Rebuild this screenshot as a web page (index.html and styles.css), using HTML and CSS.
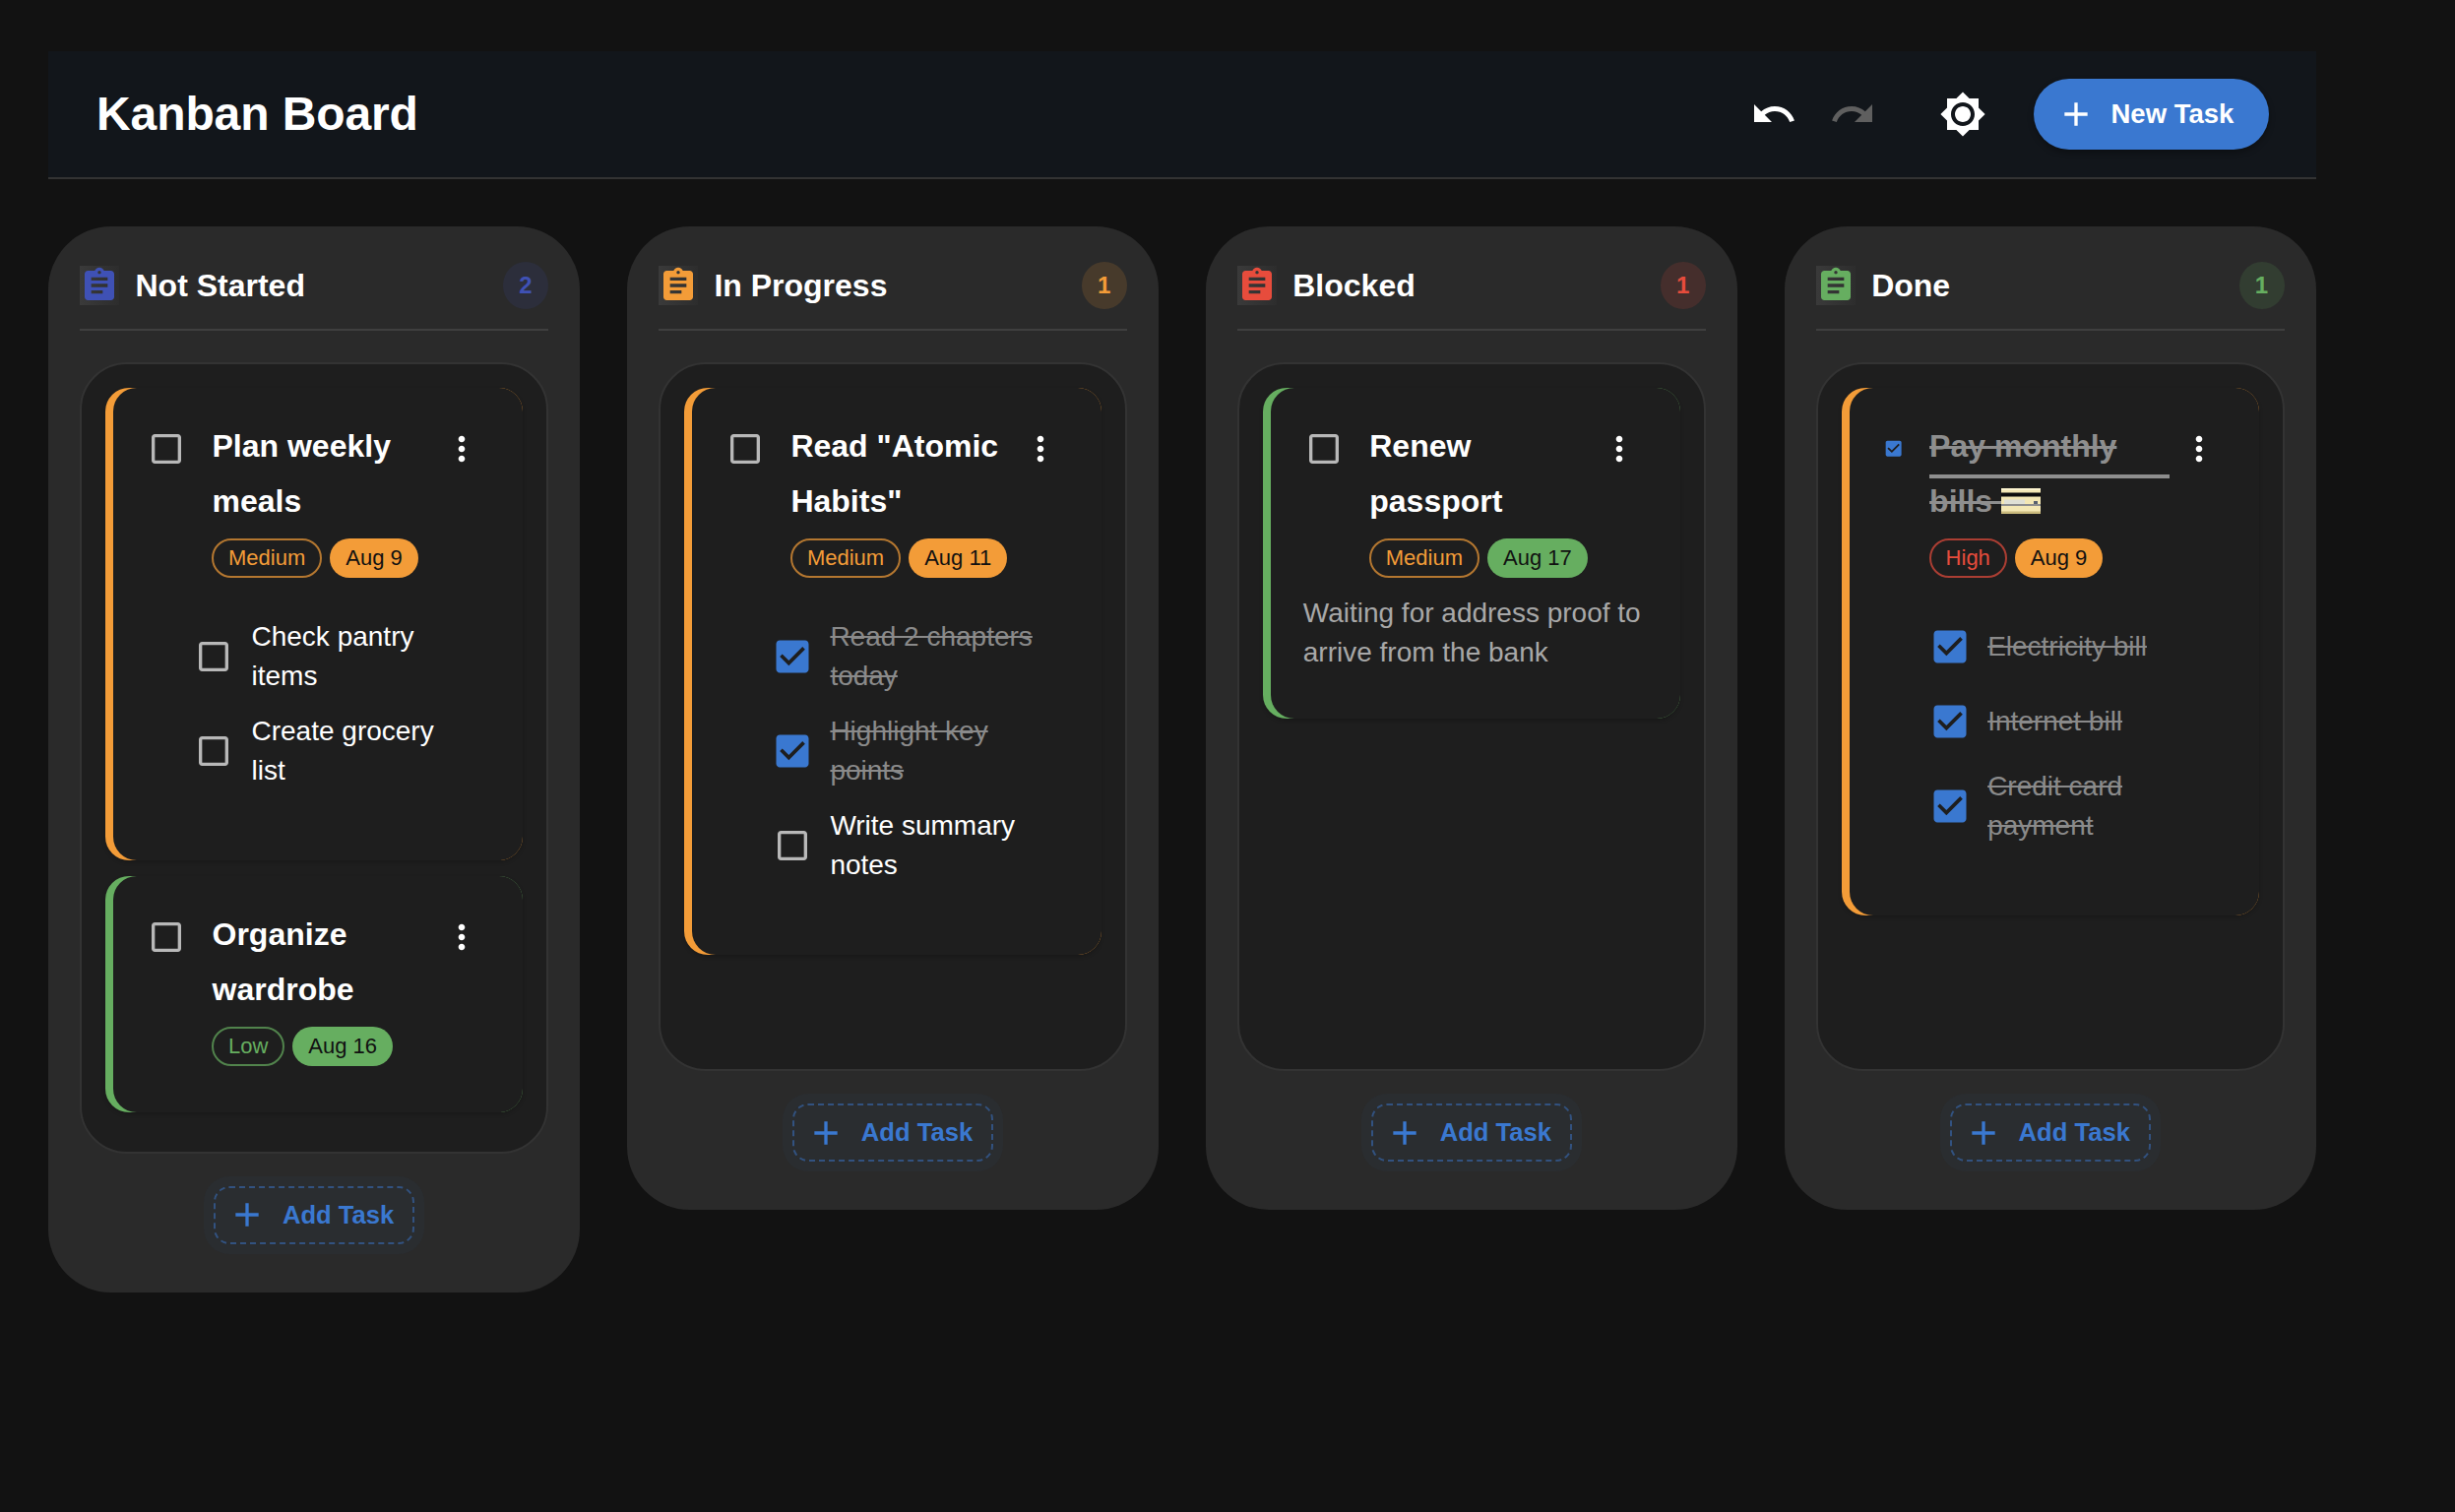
FILE: index.html
```html
<!DOCTYPE html>
<html lang="en">
<head>
<meta charset="utf-8">
<title>Kanban Board</title>
<link rel="stylesheet" href="styles.css">
</head>
<body>
<svg class="sprite" xmlns="http://www.w3.org/2000/svg">
  <symbol id="i-assign" viewBox="0 0 24 24"><path d="M19 3h-4.18C14.4 1.84 13.3 1 12 1c-1.3 0-2.4.84-2.82 2H5c-1.1 0-2 .9-2 2v14c0 1.1.9 2 2 2h14c1.1 0 2-.9 2-2V5c0-1.1-.9-2-2-2zm-7 0c.55 0 1 .45 1 1s-.45 1-1 1-1-.45-1-1 .45-1 1-1zm2 14H7v-2h7v2zm3-4H7v-2h10v2zm0-4H7V7h10v2z"/></symbol>
  <symbol id="i-blank" viewBox="0 0 24 24"><path d="M19 5v14H5V5h14m0-2H5c-1.1 0-2 .9-2 2v14c0 1.1.9 2 2 2h14c1.1 0 2-.9 2-2V5c0-1.1-.9-2-2-2z"/></symbol>
  <symbol id="i-checked" viewBox="0 0 24 24"><path d="M19 3H5c-1.11 0-2 .9-2 2v14c0 1.1.89 2 2 2h14c1.11 0 2-.9 2-2V5c0-1.1-.89-2-2-2zm-9 14l-5-5 1.41-1.41L10 14.17l7.59-7.59L19 8l-9 9z"/></symbol>
  <symbol id="i-more" viewBox="0 0 24 24"><path d="M12 8c1.1 0 2-.9 2-2s-.9-2-2-2-2 .9-2 2 .9 2 2 2zm0 2c-1.1 0-2 .9-2 2s.9 2 2 2 2-.9 2-2-.9-2-2-2zm0 6c-1.1 0-2 .9-2 2s.9 2 2 2 2-.9 2-2-.9-2-2-2z"/></symbol>
  <symbol id="i-add" viewBox="0 0 24 24"><path d="M19 13h-6v6h-2v-6H5v-2h6V5h2v6h6v2z"/></symbol>
  <symbol id="i-undo" viewBox="0 0 24 24"><path d="M12.5 8c-2.65 0-5.05.99-6.9 2.6L2 7v9h9l-3.62-3.62c1.39-1.16 3.16-1.88 5.12-1.88 3.54 0 6.55 2.31 7.6 5.5l2.37-.78C21.08 11.03 17.15 8 12.5 8z"/></symbol>
  <symbol id="i-redo" viewBox="0 0 24 24"><path d="M18.4 10.6C16.55 8.99 14.15 8 11.5 8c-4.65 0-8.58 3.03-9.96 7.22L3.9 16c1.05-3.19 4.05-5.5 7.6-5.5 1.95 0 3.73.72 5.12 1.88L13 16h9V7l-3.6 3.6z"/></symbol>
  <symbol id="i-bright" viewBox="0 0 24 24"><path d="M20 8.69V4h-4.69L12 .69 8.69 4H4v4.69L.69 12 4 15.31V20h4.69L12 23.31 15.31 20H20v-4.69L23.31 12 20 8.69zM12 18c-3.31 0-6-2.69-6-6s2.69-6 6-6 6 2.69 6 6-2.69 6-6 6zm0-10c-2.21 0-4 1.79-4 4s1.79 4 4 4 4-1.79 4-4-1.79-4-4-4z"/></symbol>
</svg>

<div class="page">
  <header class="topbar">
    <h1 class="brand">Kanban Board</h1>
    <div class="actions">
      <div class="history">
        <button class="icon-btn"><svg class="icon-48"><use href="#i-undo"/></svg></button>
        <button class="icon-btn is-disabled"><svg class="icon-48"><use href="#i-redo"/></svg></button>
      </div>
      <button class="icon-btn"><svg class="icon-48"><use href="#i-bright"/></svg></button>
      <button class="new-task"><svg class="icon-40"><use href="#i-add"/></svg><span>New Task</span></button>
    </div>
  </header>

  <main class="board">
    <!-- Not Started -->
    <section class="column tone-indigo">
      <div class="col-head">
        <svg class="col-icon"><use href="#i-assign"/></svg>
        <h2 class="col-title">Not Started</h2>
        <span class="count">2</span>
      </div>
      <div class="list">
        <article class="card stripe-orange"><div class="card-body">
          <div class="task-top">
            <svg class="box"><use href="#i-blank"/></svg>
            <div class="task-main">
              <h3 class="task-title">Plan weekly meals</h3>
              <div class="chips"><span class="chip out-orange">Medium</span><span class="chip fill-orange">Aug 9</span></div>
            </div>
            <svg class="more"><use href="#i-more"/></svg>
          </div>
          <ul class="subs">
            <li class="sub"><span class="sub-box"><svg class="box-sub"><use href="#i-blank"/></svg></span><span class="sub-text">Check pantry items</span></li>
            <li class="sub"><span class="sub-box"><svg class="box-sub"><use href="#i-blank"/></svg></span><span class="sub-text">Create grocery list</span></li>
          </ul>
        </div></article>
        <article class="card stripe-green"><div class="card-body">
          <div class="task-top">
            <svg class="box"><use href="#i-blank"/></svg>
            <div class="task-main">
              <h3 class="task-title">Organize wardrobe</h3>
              <div class="chips"><span class="chip out-green">Low</span><span class="chip fill-green">Aug 16</span></div>
            </div>
            <svg class="more"><use href="#i-more"/></svg>
          </div>
        </div></article>
      </div>
      <button class="add-task"><svg class="icon-40"><use href="#i-add"/></svg><span>Add Task</span></button>
    </section>

    <!-- In Progress -->
    <section class="column tone-orange">
      <div class="col-head">
        <svg class="col-icon"><use href="#i-assign"/></svg>
        <h2 class="col-title">In Progress</h2>
        <span class="count">1</span>
      </div>
      <div class="list">
        <article class="card stripe-orange"><div class="card-body">
          <div class="task-top">
            <svg class="box"><use href="#i-blank"/></svg>
            <div class="task-main">
              <h3 class="task-title">Read "Atomic Habits"</h3>
              <div class="chips"><span class="chip out-orange">Medium</span><span class="chip fill-orange">Aug 11</span></div>
            </div>
            <svg class="more"><use href="#i-more"/></svg>
          </div>
          <ul class="subs">
            <li class="sub is-done"><span class="sub-box"><svg class="box-sub-on"><use href="#i-checked"/></svg></span><span class="sub-text">Read 2 chapters today</span></li>
            <li class="sub is-done"><span class="sub-box"><svg class="box-sub-on"><use href="#i-checked"/></svg></span><span class="sub-text">Highlight key points</span></li>
            <li class="sub"><span class="sub-box"><svg class="box-sub"><use href="#i-blank"/></svg></span><span class="sub-text">Write summary notes</span></li>
          </ul>
        </div></article>
      </div>
      <button class="add-task"><svg class="icon-40"><use href="#i-add"/></svg><span>Add Task</span></button>
    </section>

    <!-- Blocked -->
    <section class="column tone-red">
      <div class="col-head">
        <svg class="col-icon"><use href="#i-assign"/></svg>
        <h2 class="col-title">Blocked</h2>
        <span class="count">1</span>
      </div>
      <div class="list">
        <article class="card stripe-green"><div class="card-body">
          <div class="task-top">
            <svg class="box"><use href="#i-blank"/></svg>
            <div class="task-main">
              <h3 class="task-title">Renew passport</h3>
              <div class="chips"><span class="chip out-orange">Medium</span><span class="chip fill-green">Aug 17</span></div>
            </div>
            <svg class="more"><use href="#i-more"/></svg>
          </div>
          <p class="desc">Waiting for address proof to arrive from the bank</p>
        </div></article>
      </div>
      <button class="add-task"><svg class="icon-40"><use href="#i-add"/></svg><span>Add Task</span></button>
    </section>

    <!-- Done -->
    <section class="column tone-green">
      <div class="col-head">
        <svg class="col-icon"><use href="#i-assign"/></svg>
        <h2 class="col-title">Done</h2>
        <span class="count">1</span>
      </div>
      <div class="list">
        <article class="card stripe-orange"><div class="card-body">
          <div class="task-top">
            <svg class="box-small"><use href="#i-checked"/></svg>
            <div class="task-main is-wide">
              <h3 class="task-title is-struck">Pay monthly bills <svg class="emoji-card" viewBox="0 0 40 26" role="img" aria-label="credit card">
                <rect x="0" y="0" width="40" height="26" rx="2" fill="#f3e7b4"/>
                <rect x="0" y="4.5" width="40" height="4" fill="#0d0d0d"/>
                <rect x="0" y="0" width="40" height="2" fill="#fbf3cf"/>
                <rect x="3" y="11.5" width="21" height="6" fill="#dfe0d6"/>
                <rect x="33" y="13" width="4" height="3" fill="#57606e"/>
                <rect x="0" y="23.5" width="40" height="2.5" fill="#c9b97c"/>
                <rect x="0" y="16" width="41" height="2" fill="#8e8e8e"/>
              </svg></h3>
              <div class="chips"><span class="chip out-red">High</span><span class="chip fill-orange">Aug 9</span></div>
            </div>
            <svg class="more"><use href="#i-more"/></svg>
          </div>
          <ul class="subs">
            <li class="sub is-done"><span class="sub-box"><svg class="box-sub-on"><use href="#i-checked"/></svg></span><span class="sub-text">Electricity bill</span></li>
            <li class="sub is-done"><span class="sub-box"><svg class="box-sub-on"><use href="#i-checked"/></svg></span><span class="sub-text">Internet bill</span></li>
            <li class="sub is-done"><span class="sub-box"><svg class="box-sub-on"><use href="#i-checked"/></svg></span><span class="sub-text">Credit card payment</span></li>
          </ul>
        </div></article>
      </div>
      <button class="add-task"><svg class="icon-40"><use href="#i-add"/></svg><span>Add Task</span></button>
    </section>
  </main>
</div>
</body>
</html>
```
FILE: styles.css
```css
* { box-sizing: border-box; }
html, body { margin: 0; padding: 0; }
body {
  background: #121212;
  color: #fff;
  font-family: "Liberation Sans", Arial, sans-serif;
  min-height: 1536px;
}
.sprite { display: none; }
svg { fill: currentColor; flex: none; }
button {
  font: inherit;
  color: inherit;
  background: none;
  border: 0;
  padding: 0;
  cursor: pointer;
}

.page { padding: 52px 141.5px 0 49px; }

/* Top bar */
.topbar {
  display: flex;
  align-items: center;
  justify-content: space-between;
  height: 130px;
  padding: 0 48px 0 49px;
  background: #12161b;
  border-bottom: 2px solid #333;
}
.brand { margin: 0; font-size: 48px; font-weight: 700; line-height: 56px; letter-spacing: -0.1px; }
.actions { display: flex; align-items: center; gap: 32px; }
.history { display: flex; }
.icon-btn { width: 80px; height: 80px; display: flex; align-items: center; justify-content: center; color: #fff; }
.icon-btn.is-disabled { color: #5f5f5f; }
.icon-48 { width: 48px; height: 48px; }
.icon-40 { width: 40px; height: 40px; }
.new-task {
  display: flex;
  align-items: center;
  gap: 16px;
  height: 72px;
  width: 239px;
  padding-left: 23px;
  border-radius: 36px;
  background: #3a78d0;
  font-size: 27.5px;
  font-weight: 700;
  box-shadow: 0 3px 6px rgba(0, 0, 0, .3);
}

/* Board */
.board {
  display: grid;
  grid-template-columns: repeat(4, 1fr);
  gap: 48px;
  align-items: start;
  margin-top: 48px;
}
.column { background: #2a2a2a; border-radius: 64px; padding: 32px; display: flex; flex-direction: column; }
.tone-indigo { --tone: #3f51b5; --tone-soft: rgba(63, 81, 181, .13); }
.tone-orange { --tone: #f39c38; --tone-soft: rgba(243, 156, 56, .15); }
.tone-red { --tone: #e74c3c; --tone-soft: rgba(231, 76, 60, .15); }
.tone-green { --tone: #66ae60; --tone-soft: rgba(102, 174, 96, .15); }

.col-head {
  display: flex;
  align-items: center;
  padding: 4px 0 20px;
  border-bottom: 2px solid #3f3f3f;
  margin-bottom: 32px;
}
.col-icon {
  width: 40px;
  height: 40px;
  color: var(--tone);
  background: linear-gradient(90deg, #3a3a3a, #2d2d2d);
  margin-right: 16.5px;
}
.col-title { margin: 0; flex: 1; font-size: 32px; font-weight: 700; line-height: 48px; }
.count {
  width: 46px;
  height: 48px;
  border-radius: 50%;
  background: var(--tone-soft);
  color: var(--tone);
  font-size: 24px;
  font-weight: 700;
  line-height: 48px;
  text-align: center;
}

/* Drop list */
.list {
  min-height: 720px;
  padding: 24px 24px 24px;
  background: #1e1e1e;
  border: 2px solid #333;
  border-radius: 48px;
}

/* Cards: the stripe is the coloured base peeking out from behind the body */
.card {
  padding-left: 8px;
  border-radius: 24px;
  margin-bottom: 16px;
  box-shadow: 0 2px 4px rgba(0, 0, 0, .2);
}
.stripe-orange { background: #f39c38; }
.stripe-green { background: #66ae60; }
.card-body {
  background: #1e1e1e;
  border-radius: 24px;
  padding: 31px 32px 47px 33px;
}
.task-top { display: flex; align-items: flex-start; }
.box { width: 40px; height: 40px; margin: 11px 26px 0 1px; color: #b8b8b8; }
.box-small { width: 21.3px; height: 21.3px; margin: 20.4px 25.4px 0 1.3px; color: #3a78d0; }
.task-main { width: 224px; flex: none; }
.task-main.is-wide { width: 244px; }
.task-title { margin: 0; font-size: 32px; font-weight: 700; line-height: 56px; padding-left: .5px; }
.task-title.is-struck { position: relative; color: #8e8e8e; text-decoration: line-through; }
.task-title.is-struck::after {
  content: "";
  position: absolute;
  left: 0;
  right: 0;
  top: 57px;
  height: 4px;
  background: #8e8e8e;
}
.emoji-card { width: 40px; height: 26px; vertical-align: -2px; }
.more { width: 40px; height: 40px; margin: 11px 0 0 10px; color: #fff; }

.chips { display: flex; gap: 8px; margin-top: 10px; }
.chip {
  height: 40px;
  padding: 0 16px;
  border-radius: 20px;
  font-size: 22px;
  line-height: 40px;
  white-space: nowrap;
}
.fill-orange { background: #f39c38; color: #111; }
.fill-green { background: #66ae60; color: #111; }
.out-orange, .out-green, .out-red { padding: 0 15px; line-height: 36px; border: 2px solid; }
.out-orange { color: #f39c38; border-color: rgba(243, 156, 56, .7); }
.out-green { color: #66ae60; border-color: rgba(102, 174, 96, .7); }
.out-red { color: #e74c3c; border-color: rgba(231, 76, 60, .7); }

/* Subtasks */
.subs { list-style: none; margin: 40px 0 0; padding: 0 0 23.5px 47px; display: flex; flex-direction: column; gap: 16px; }
.sub { display: flex; align-items: center; min-height: 60px; gap: 16.5px; }
.sub-box { width: 44px; height: 44px; display: flex; align-items: center; justify-content: center; flex: none; }
.box-sub { width: 40px; height: 40px; color: #b8b8b8; }
.box-sub-on { width: 44px; height: 44px; color: #3a78d0; }
.sub-text { max-width: 212px; font-size: 28px; line-height: 40px; }
.is-done .sub-text { color: #8a8a8a; text-decoration: line-through; }

.desc { margin: 16px 0 0; font-size: 28px; line-height: 40px; color: #a8a8a8; }

/* Add task */
.add-task {
  align-self: center;
  display: flex;
  align-items: center;
  gap: 16px;
  width: 204px;
  height: 59px;
  margin: 33px 0 17px;
  padding: 0 18px 0 12px;
  border: 2px dashed rgba(58, 120, 208, .5);
  border-radius: 16px;
  background: rgba(58, 120, 208, .04);
  box-shadow: 0 0 0 10px rgba(58, 120, 208, .04);
  color: #3a78d0;
  font-size: 25.6px;
  font-weight: 700;
  white-space: nowrap;
}
```
